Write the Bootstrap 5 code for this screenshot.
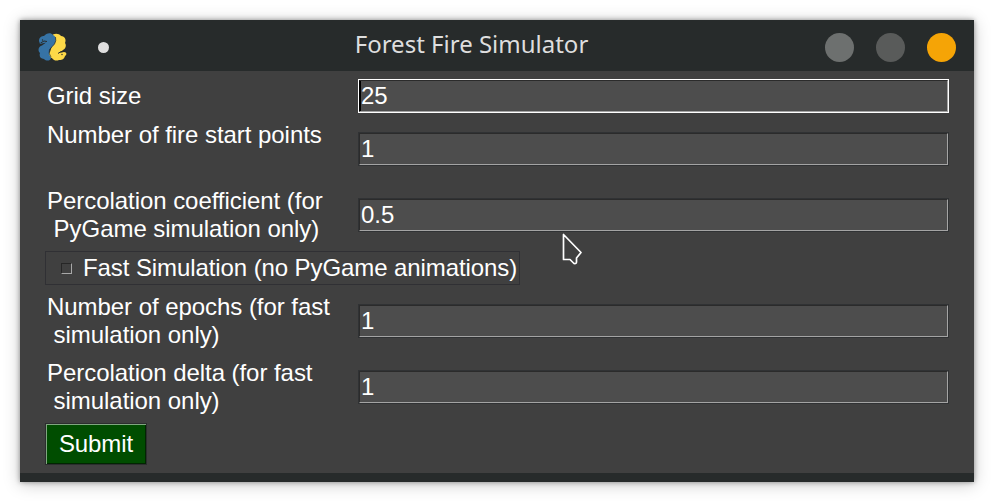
<!DOCTYPE html>
<html lang="en">
<head>
<meta charset="utf-8">
<title>Forest Fire Simulator</title>
<link href="https://cdn.jsdelivr.net/npm/bootstrap@5.3.0/dist/css/bootstrap.min.css" rel="stylesheet">
<style>
body { width: 994px; height: 502px; padding: 20px; overflow: hidden; background: #fff; }
.app-window { width: 954px; height: 462px; background: #404040; color: #fff; box-shadow: 0 0 5px rgba(0,0,0,.4), 0 2px 16px rgba(0,0,0,.22); font: 24px/28px "Liberation Sans", Arial, sans-serif; }
.title-bar { height: 51px; background: #272b2b; padding: 4px 18px 0; }
.title-side { width: 131px; }
.title-text { font: 24px/42px "Noto Sans", sans-serif; color: #dedede; padding: 0 51px 8px 0; }
.pin-dot { width: 11px; height: 11px; background: #dfdfdf; margin-left: 31px; }
.win-dot { width: 29px; height: 29px; }
.dot-min { background: #6d706f; }
.dot-max { background: #595b5a; }
.dot-close { background: #f5a406; }
.form-area { padding: 8px 25px 0; gap: 6px; }
.field-row { height: 60px; }
.field-row.short { height: 34px; }
.field-label { width: 313px; padding: 2px 0 0 2px; white-space: pre; align-self: flex-start; letter-spacing: -.05px; }
.short .field-label { padding-top: 3px; }
.entry { width: 591px; height: 34px; background: #4d4d4d; border: 1px solid #303234; }
.entry-inner { height: 32px; border: 1px solid; border-color: #2b2b2b #a4a4a4 #a4a4a4 #2b2b2b; padding: 0 0 0 1px; line-height: 29px; }
.entry.focused { border-color: #fff; }
.focused .entry-inner { box-shadow: inset 1px 0 #000; border-left-color: #000; }
.check-box-row { width: 475px; height: 34px; border: 1px solid #303034; padding-left: 15px; letter-spacing: -.09px; }
.tick { width: 11px; height: 11px; border: 1px solid; border-color: #262626 #a8a8a8 #a8a8a8 #262626; margin-right: 11px; }
.submit-btn { width: 102px; height: 42px; padding: 0; border: 1px solid #2b2d2e; border-radius: 0; background: #004d00; color: #fff; font: inherit; letter-spacing: -.1px; box-shadow: inset 1px 1px #80a680, inset -1px -1px #002600; }
.status-edge { height: 9px; background: #272b2b; }
.pointer { left: 561px; top: 232px; }
</style>
<script src="https://cdn.jsdelivr.net/npm/bootstrap@5.3.0/dist/js/bootstrap.bundle.min.js"></script>
</head>
<body>
<main class="app-window d-flex flex-column">
  <header class="title-bar d-flex align-items-center justify-content-between">
    <div class="title-side d-flex align-items-center">
      <svg width="29" height="29" viewBox="0 0 29 29">
        <path d="M14 3C15 0 21 0 23 3C27 3 28.500 7 27 10C29 13 27 16 25 17L21.500 20L26 19C29 19 29 22 27 23C26 27 23 27 21 27C18 28.500 15 27 14 25C10 24 10 21 12 19L15 10Z" fill="#fdd948"/>
        <path d="M1 8C1 4 4 3 6 3C8 0 13-1 15 2C18 3 18.500 7 17 10C16 13 11 15 11.500 18C10.500 21 12 23 13 25C12 28.500 8 28 6 26C2 26 1 23 2 20C-1 17 1 13 4 12.500L8 9.500L2 11Z" fill="#3673a5"/>
        <path d="M17.500 4Q18.500 8 16.500 11L11.500 16.500Q10 20 13 24" fill="none" stroke="#272b2b" stroke-width=".7"/>
        <path d="M2.500 10L6 8 9 8.500M20 20.500L23 18.500 26.500 18.500" fill="none" stroke="#272b2b"/>
        <circle cx="4.500" cy="7" r=".7" fill="#272b2b"/><circle cx="24" cy="21.500" r=".7" fill="#272b2b"/>
      </svg>
      <span class="pin-dot rounded-circle"></span>
    </div>
    <div class="title-text">Forest Fire Simulator</div>
    <div class="title-side d-flex justify-content-between">
      <span class="win-dot dot-min rounded-circle"></span>
      <span class="win-dot dot-max rounded-circle"></span>
      <span class="win-dot dot-close rounded-circle"></span>
    </div>
  </header>
  <section class="form-area d-flex flex-column flex-grow-1">
    <div class="field-row short d-flex align-items-center"><div class="field-label">Grid size</div><div class="entry focused"><div class="entry-inner">25</div></div></div>
    <div class="field-row d-flex align-items-center"><div class="field-label">Number of fire start points</div><div class="entry"><div class="entry-inner">1</div></div></div>
    <div class="field-row d-flex align-items-center"><div class="field-label">Percolation coefficient (for
 PyGame simulation only)</div><div class="entry"><div class="entry-inner">0.5</div></div></div>
    <div class="check-box-row d-flex align-items-center text-nowrap"><span class="tick flex-shrink-0"></span><span>Fast Simulation (no PyGame animations)</span></div>
    <div class="field-row d-flex align-items-center"><div class="field-label">Number of epochs (for fast
 simulation only)</div><div class="entry"><div class="entry-inner">1</div></div></div>
    <div class="field-row d-flex align-items-center"><div class="field-label">Percolation delta (for fast
 simulation only)</div><div class="entry"><div class="entry-inner">1</div></div></div>
    <button class="submit-btn btn" type="button">Submit</button>
  </section>
  <footer class="status-edge"></footer>
</main>
<svg class="pointer position-absolute" width="24" height="36" viewBox="0 0 24 36"><path d="M2.500 2.500V27.500H9L13 31.500Q15.500 32 15.500 30V26L20 20.500Z" fill="#404040" stroke="#fff" stroke-width="1.700" stroke-linejoin="round"/></svg>
</body>
</html>
